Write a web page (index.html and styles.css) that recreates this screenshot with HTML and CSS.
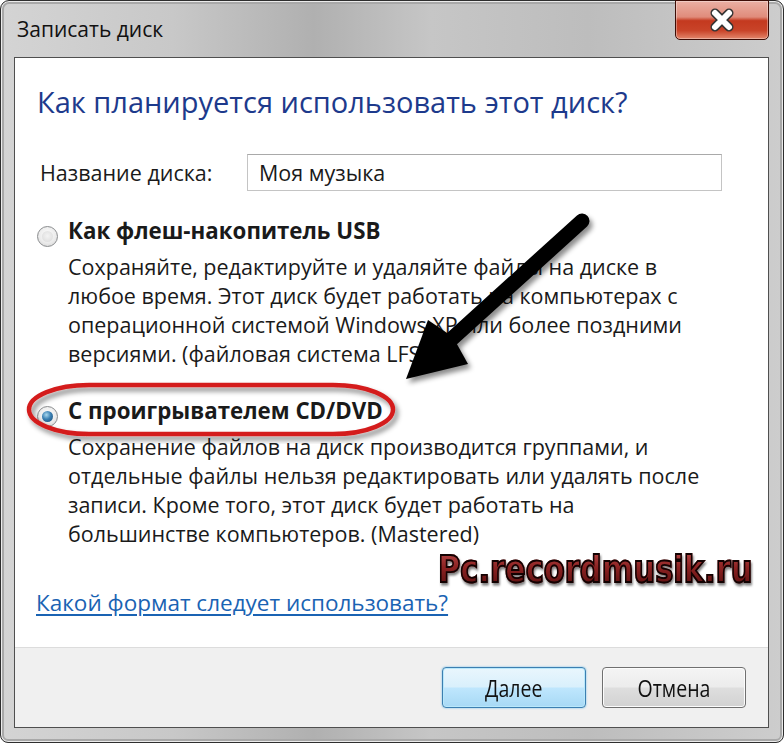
FILE: index.html
```html
<!DOCTYPE html>
<html lang="ru">
<head>
  <meta charset="UTF-8">
  <title>Записать диск</title>
  <link rel="stylesheet" href="styles.css">
</head>
<body>
  <div class="window">
    <div class="titlebar">
      <span class="title">Записать диск</span>
      <div class="close">
        <svg width="24" height="24" viewBox="0 0 24 24">
          <path d="M5 5 L19 19 M19 5 L5 19" stroke="#333" stroke-width="9" stroke-linecap="round" />
          <path d="M5 5 L19 19 M19 5 L5 19" stroke="#fff" stroke-width="6" stroke-linecap="round" />
        </svg>
      </div>
    </div>

    <div class="client">
      <div class="content">
        <h1>Как планируется использовать этот диск?</h1>

        <div class="name-row">
          <span class="name-label">Название диска:</span>
          <div class="name-input">Моя музыка</div>
        </div>

        <div class="option option-first">
          <span class="radio"></span>
          <div class="opt-title">Как флеш-накопитель USB</div>
          <p class="opt-desc">Сохраняйте, редактируйте и удаляйте файлы на диске в<br>любое время. Этот диск будет работать на компьютерах с<br>операционной системой Windows XP или более поздними<br>версиями. (файловая система LFS)</p>
        </div>

        <div class="option option-second">
          <span class="radio checked"></span>
          <div class="opt-title">С проигрывателем CD/DVD</div>
          <p class="opt-desc">Сохранение файлов на диск производится группами, и<br>отдельные файлы нельзя редактировать или удалять после<br>записи. Кроме того, этот диск будет работать на<br>большинстве компьютеров. (Mastered)</p>
        </div>

        <a class="help-link" href="#">Какой формат следует использовать?</a>
      </div>

      <div class="footer">
        <button class="btn btn-default"><span>Далее</span></button>
        <button class="btn"><span>Отмена</span></button>
      </div>
    </div>

    <!-- annotations drawn over the dialog -->
    <svg class="marks" width="784" height="743" viewBox="0 0 784 743">
      <defs>
        <filter id="shadow" x="-20%" y="-20%" width="140%" height="140%">
          <feDropShadow dx="3" dy="4" stdDeviation="2.5" flood-color="#000" flood-opacity="0.45" />
        </filter>
      </defs>
      <rect x="29" y="385" width="364" height="49" rx="60" ry="24.5" fill="none" stroke="#d41d1d" stroke-width="4.5" filter="url(#shadow)" />
      <g filter="url(#shadow)">
        <line x1="582" y1="221" x2="445" y2="345" stroke="#000" stroke-width="15" stroke-linecap="round" />
        <polygon points="406,379 428,320 453,337 468,364" fill="#000" />
      </g>
    </svg>

    <div class="watermark">Pc.recordmusik.ru</div>
  </div>
</body>
</html>
```

FILE: styles.css
```css
body { margin: 0; background: #fff; font-family: "Open Sans", "Noto Sans", sans-serif; color: #1a1a1a; }

.window {
  position: relative; width: 784px; height: 743px; box-sizing: border-box;
  display: flex; flex-direction: column;
  border: 1px solid #2e2e2e; border-radius: 9px 9px 8px 8px;
  padding: 0 14px 14px 13px;
  background: linear-gradient(90deg, #d4d4d4 0%, #c8c8c8 22%, #b0b0b0 40%, #c6c6c6 55%, #bdbdbd 75%, #cdcdcd 100%);
  box-shadow: inset 0 0 0 1px #ebebeb, inset 0 0 0 3px #a8a8a8;
}

.titlebar { height: 56px; display: flex; justify-content: space-between; align-items: flex-start; }
.title { padding: 14px 0 0 3px; font-size: 21px; line-height: 28px; color: #111; }
.close {
  width: 94px; height: 40px; margin-top: -1px; box-sizing: border-box;
  display: flex; align-items: center; justify-content: center;
  border: 1px solid #3d0d06; border-radius: 0 0 5px 5px;
  background: linear-gradient(#eab0a4 0%, #e08c7b 42%, #c4391f 52%, #c94429 78%, #e4876c 100%);
  box-shadow: inset 0 0 0 1px rgba(255,255,255,0.35);
}

.client { flex: 1; display: flex; flex-direction: column; border: 1px solid #4f4f4f; background: #fff; }
.content { flex: 1; padding-left: 22px; }

h1 { margin: 26px 0 0; font-size: 29px; line-height: 36px; font-weight: normal; color: #1d3a8c; }

.name-row { display: flex; align-items: center; margin-top: 34px; font-size: 21.5px; }
.name-label { width: 207px; padding-left: 3px; }
.name-input {
  width: 475px; height: 37px; box-sizing: border-box; padding-left: 11px;
  border: 1px solid #c4c4c4; border-top-color: #a9a9a9; line-height: 35px;
}

.option { display: grid; grid-template-columns: 21px 1fr; column-gap: 10px; font-size: 21.5px; }
.option-first { margin-top: 25px; }
.option-second { margin-top: 28px; }
.opt-title { font-weight: bold; font-size: 22.3px; line-height: 30px; }
.opt-desc { grid-column: 2; margin: 5px 0 0; line-height: 29px; }

.radio {
  width: 21px; height: 21px; margin-top: 10px; box-sizing: border-box; border-radius: 50%;
  border: 1px solid #8a8c8e; position: relative;
  background: radial-gradient(circle at 50% 40%, #fdfdfd 0%, #ececec 55%, #cfcfcf 100%);
}
.radio::after {
  content: ""; position: absolute; left: 4px; top: 4px; width: 11px; height: 11px; border-radius: 50%;
  background: radial-gradient(circle at 50% 45%, #f3f3f3, #d9d9d9);
}
.radio.checked::after { background: radial-gradient(circle at 40% 35%, #a9d8ee 0%, #3a80b3 45%, #17456e 100%); }

.help-link {
  display: block; margin-top: 40px; font-size: 22.5px; line-height: 30px;
  color: #1a63b3; text-decoration: underline; text-underline-offset: 3px;
  width: max-content; margin-left: -1px;
}

.footer {
  height: 80px; box-sizing: border-box; display: flex; justify-content: flex-end; gap: 16px;
  padding: 19px 22px 0 0; border-top: 1px solid #dcdcdc; background: #f0f0f0;
}
.btn {
  width: 144px; height: 41px; border-radius: 4px; border: 1px solid #707070;
  font-family: "Open Sans", sans-serif; font-size: 23px; color: #111;
  background: linear-gradient(#f4f4f4 0%, #ececec 48%, #dedede 52%, #d2d2d2 100%);
  box-shadow: inset 0 0 0 1px #fcfcfc;
}
.btn span { display: inline-block; transform: scaleX(0.85); }
.btn-default {
  border-color: #3c7fb1;
  background: linear-gradient(#e9f6fd 0%, #d9f0fc 48%, #bee6fd 52%, #a7d9f5 100%);
  box-shadow: inset 0 0 0 1px #b9e8fb, 0 0 2px #5fb6e6;
}

.marks { position: absolute; left: -1px; top: -1px; pointer-events: none; }

.watermark {
  position: absolute; left: 437px; top: 546px;
  font-family: "DejaVu Sans", sans-serif; font-weight: bold; font-size: 30.5px; line-height: 36px;
  transform: scaleY(1.25); transform-origin: left top;
  background: linear-gradient(#c45252 0%, #8c2222 45%, #4e0a0a 100%);
  -webkit-background-clip: text; background-clip: text; color: transparent;
  -webkit-text-stroke: 1.5px #120202;
  filter: drop-shadow(1px 2px 1px rgba(0,0,0,0.5));
}
```
